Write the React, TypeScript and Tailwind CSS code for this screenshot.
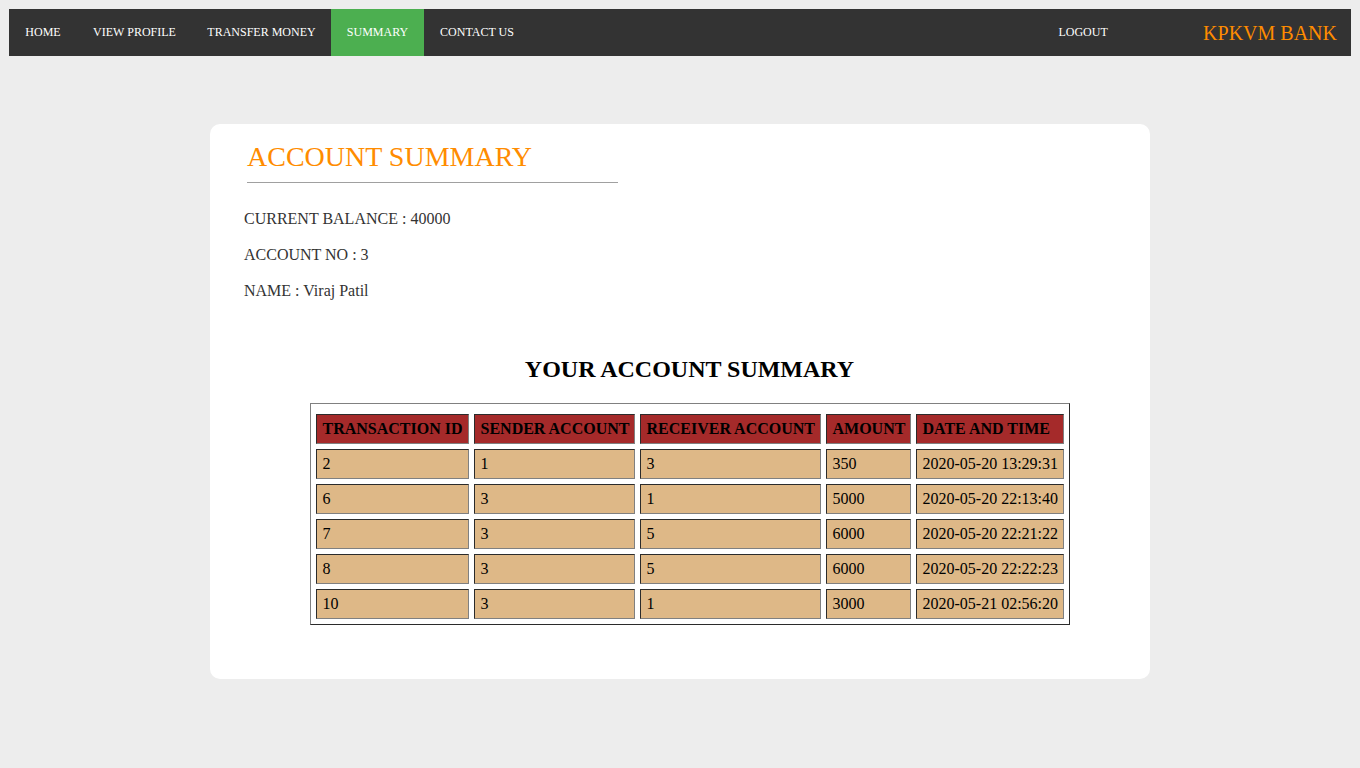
import React from "react";

const links = [
    { label: "HOME", w: "w-[68px]" },
    { label: "VIEW PROFILE", w: "w-[115px]" },
    { label: "TRANSFER MONEY", w: "w-[139px]" },
    { label: "SUMMARY", w: "w-[93px]", active: true },
    { label: "CONTACT US", w: "w-[106px]" },
];

const rows = [
    ["2", "1", "3", "350", "2020-05-20 13:29:31"],
    ["6", "3", "1", "5000", "2020-05-20 22:13:40"],
    ["7", "3", "5", "6000", "2020-05-20 22:21:22"],
    ["8", "3", "5", "6000", "2020-05-20 22:22:23"],
    ["10", "3", "1", "3000", "2020-05-21 02:56:20"],
];

const cols = [
    { label: "TRANSACTION ID", w: "w-[153px]" },
    { label: "SENDER ACCOUNT", w: "w-[161px]" },
    { label: "RECEIVER ACCOUNT", w: "w-[181px]" },
    { label: "AMOUNT", w: "w-[85px]" },
    { label: "DATE AND TIME", w: "w-[148px]" },
];

const cell =
    "whitespace-nowrap border border-solid border-t-[#2b2b2b] border-l-[#2b2b2b] border-b-[#808080] border-r-[#808080] pl-[6px] pr-[3px] py-[5px] text-left leading-[18px] text-[16px] text-black";

export default function App() {
    return (
        <div className="min-h-screen bg-[#ededed] p-[9px] font-['Liberation_Serif',serif]">
            {/* top navigation */}
            <nav className="flex h-[47px] items-stretch bg-[#333333]">
                {links.map((l) => (
                    <a
                        key={l.label}
                        className={`${l.w} flex items-center justify-center whitespace-nowrap pb-px text-[12px] text-white ${
                            l.active ? "bg-[#4caf50]" : ""
                        }`}
                    >
                        {l.label}
                    </a>
                ))}
                <div className="flex-1" />
                <a className="flex w-[80px] items-center justify-center pb-px text-[12px] text-white">LOGOUT</a>
                <div className="ml-[80px] flex items-center whitespace-nowrap pr-[14px] text-[20px] text-[#ff8c00]">
                    KPKVM BANK
                </div>
            </nav>

            {/* summary card */}
            <div className="mx-auto mt-[68px] w-[940px] rounded-[10px] bg-white pb-[54px] pl-[34px] pr-[15px] pt-[17px]">
                <div className="ml-[3px] w-[371px]">
                    <h1 className="text-[28px] leading-[32px] text-[#ff8c00]">ACCOUNT SUMMARY</h1>
                    <div className="mt-[9px] h-px bg-[#a0a0a0]" />
                </div>
                <div className="mt-[27px] flex flex-col gap-[18px] text-[16px] leading-[18px] text-[#333333]">
                    <p>CURRENT BALANCE : 40000</p>
                    <p>ACCOUNT NO : 3</p>
                    <p>NAME : Viraj Patil</p>
                </div>

                <h2 className="mt-[55px] text-center text-[24px] font-bold leading-[28px] text-black">
                    YOUR ACCOUNT SUMMARY
                </h2>

                <div className="mt-[20px] flex justify-center">
                    <table className="table-fixed border-separate border-spacing-[5px] border border-solid border-t-[#808080] border-l-[#808080] border-b-[#2b2b2b] border-r-[#2b2b2b] pt-[5px]">
                        <thead>
                            <tr>
                                {cols.map((c) => (
                                    <th key={c.label} className={`${cell} ${c.w} bg-[#a52a2a] font-bold`}>
                                        {c.label}
                                    </th>
                                ))}
                            </tr>
                        </thead>
                        <tbody>
                            {rows.map((r, i) => (
                                <tr key={i}>
                                    {r.map((v, j) => (
                                        <td key={j} className={`${cell} bg-[#deb887]`}>
                                            {v}
                                        </td>
                                    ))}
                                </tr>
                            ))}
                        </tbody>
                    </table>
                </div>
            </div>
        </div>
    );
}
